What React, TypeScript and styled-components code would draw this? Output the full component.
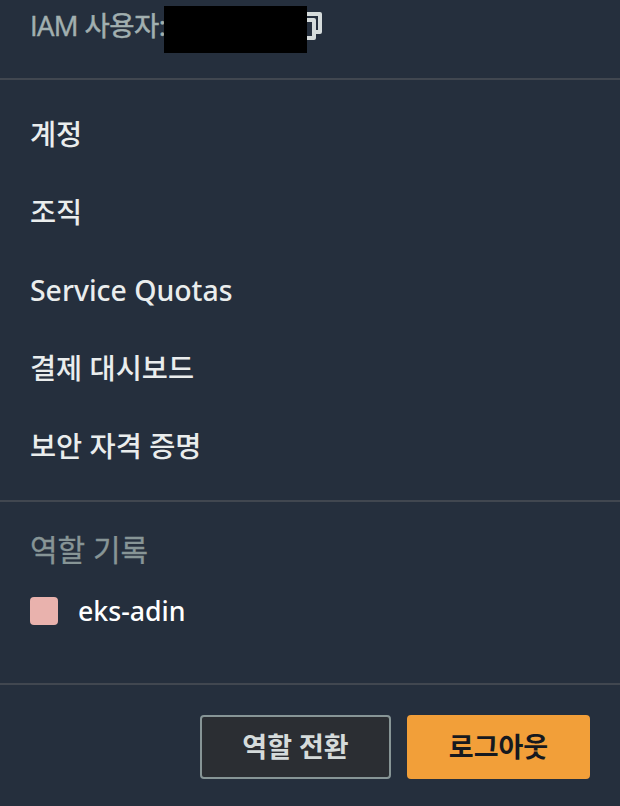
import React from "react";
import styled, { createGlobalStyle } from "styled-components";

const Global = createGlobalStyle`
  * { box-sizing: border-box; }
  body { margin: 0; background: #252f3d; }
`;

const Menu = styled.main`
  width: 620px;
  height: 806px;
  display: flex;
  flex-direction: column;
  overflow: hidden;
  background: #252f3d;
  color: #eaeded;
  font-family: "Noto Sans", "Noto Sans CJK KR", sans-serif;
  font-size: 28px;
  line-height: 40px;
  white-space: nowrap;
`;

const UserBar = styled.header`
  height: 80px;
  flex: none;
  display: flex;
  padding: 6px 0 0 30px;
  border-bottom: 2px solid #414750;
`;

const UserLabel = styled.span`
  width: 134px;
  color: #a2b0b0;
  font-family: "Open Sans", "Noto Sans CJK KR", sans-serif;
  font-size: 27.5px;
  letter-spacing: -0.6px;
  -webkit-text-stroke: 0.5px currentColor;
`;

const Redaction = styled.span`
  width: 143px;
  height: 47px;
  background: #000;
`;

const CopyIcon = styled.svg`
  width: 16px;
  height: 36px;
`;

const Links = styled.nav`
  height: 422px;
  flex: none;
  display: flex;
  flex-direction: column;
  gap: 38px;
  padding: 34px 30px 0;
  border-bottom: 2px solid #414750;
`;

const MenuLink = styled.a`
  font-size: 28.4px;
  font-weight: 500;
`;

const Roles = styled.section`
  height: 183px;
  flex: none;
  padding: 28px 30px 0;
  border-bottom: 2px solid #414750;
`;

const RoleHeading = styled.h2`
  margin: 0;
  color: #879596;
  font-size: 30px;
  font-weight: 400;
  -webkit-text-stroke: 0.3px currentColor;
`;

const Role = styled.div`
  display: flex;
  align-items: center;
  gap: 20px;
  margin-top: 21px;
  color: #fff;
  font-size: 26.7px;
  font-weight: 500;
`;

const Swatch = styled.span`
  width: 28px;
  height: 28px;
  border-radius: 4px;
  background: #e9b2ad;
`;

const Actions = styled.footer`
  display: flex;
  gap: 16px;
  justify-content: flex-end;
  padding: 30px 30px 0;
`;

const Button = styled.button<{ $primary?: boolean }>`
  width: ${(p) => (p.$primary ? 183 : 191)}px;
  height: 64px;
  padding: 0;
  border: 2px solid ${(p) => (p.$primary ? "#f29f39" : "#879596")};
  border-radius: 4px;
  background: ${(p) => (p.$primary ? "#f29f39" : "#2b2e33")};
  color: ${(p) => (p.$primary ? "#16191f" : "#d5dbdb")};
  font: 700 27px/40px "Noto Sans", "Noto Sans CJK KR", sans-serif;
`;

export default function App() {
  return (
    <>
      <Global />
      <Menu>
        <UserBar>
          <UserLabel>IAM 사용자:</UserLabel>
          <Redaction />
          <CopyIcon viewBox="0 0 16 36" fill="none" stroke="#d5dbdb" strokeWidth="4" strokeLinejoin="round">
            <path d="M-1 8H13V26H9" />
            <path d="M-1 14H7V32H-1" />
          </CopyIcon>
        </UserBar>
        <Links>
          <MenuLink>계정</MenuLink>
          <MenuLink>조직</MenuLink>
          <MenuLink>Service Quotas</MenuLink>
          <MenuLink>결제 대시보드</MenuLink>
          <MenuLink>보안 자격 증명</MenuLink>
        </Links>
        <Roles>
          <RoleHeading>역할 기록</RoleHeading>
          <Role>
            <Swatch />
            eks-adin
          </Role>
        </Roles>
        <Actions>
          <Button>역할 전환</Button>
          <Button $primary>로그아웃</Button>
        </Actions>
      </Menu>
    </>
  );
}
